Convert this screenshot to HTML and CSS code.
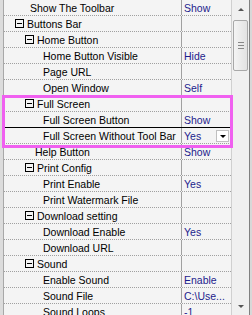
FILE: index.html
```html
<!DOCTYPE html>
<html lang="en">
<head>
    <meta charset="UTF-8">
    <title>Toolbar Settings</title>
    <link rel="stylesheet" href="styles.css">
</head>
<body>
    <div class="grid-window">
        <div class="edge"></div>
        <div class="rows">
            <div class="row"><div class="label leaf1">Show The Toolbar</div><div class="value">Show</div></div>
            <div class="row"><div class="label node1"><span class="toggle"></span>Buttons Bar</div><div class="value"></div></div>
            <div class="row"><div class="label node2"><span class="toggle"></span>Home Button</div><div class="value"></div></div>
            <div class="row"><div class="label leaf3">Home Button Visible</div><div class="value">Hide</div></div>
            <div class="row"><div class="label leaf3">Page URL</div><div class="value"></div></div>
            <div class="row"><div class="label leaf3">Open Window</div><div class="value">Self</div></div>
            <div class="row"><div class="label node2"><span class="toggle"></span>Full Screen</div><div class="value"></div></div>
            <div class="row"><div class="label leaf3">Full Screen Button</div><div class="value">Show</div></div>
            <div class="row editing"><div class="label leaf3">Full Screen Without Tool Bar</div><div class="value">Yes<span class="drop"></span></div></div>
            <div class="row"><div class="label leaf2">Help Button</div><div class="value">Show</div></div>
            <div class="row"><div class="label node2"><span class="toggle"></span>Print Config</div><div class="value"></div></div>
            <div class="row"><div class="label leaf3">Print Enable</div><div class="value">Yes</div></div>
            <div class="row"><div class="label leaf3">Print Watermark File</div><div class="value"></div></div>
            <div class="row"><div class="label node2"><span class="toggle"></span>Download setting</div><div class="value"></div></div>
            <div class="row"><div class="label leaf3">Download Enable</div><div class="value">Yes</div></div>
            <div class="row"><div class="label leaf3">Download URL</div><div class="value"></div></div>
            <div class="row"><div class="label node2"><span class="toggle"></span>Sound</div><div class="value"></div></div>
            <div class="row"><div class="label leaf3">Enable Sound</div><div class="value">Enable</div></div>
            <div class="row"><div class="label leaf3">Sound File</div><div class="value">C:\Use...</div></div>
            <div class="row"><div class="label leaf3">Sound Loops</div><div class="value">-1</div></div>
            <div class="highlight"></div>
        </div>
        <div class="scrollbar">
            <div class="arrow up"></div>
            <div class="thumb"><span class="grip"></span></div>
            <div class="track"></div>
            <div class="arrow down"></div>
        </div>
        <div class="frame"></div>
    </div>
</body>
</html>
```

FILE: styles.css
```css
body {
    margin: 0;
    font-family: "Liberation Sans", Arial, sans-serif;
    font-size: 10.5px;
    background-color: #f4f4f4;
}

.grid-window {
    display: flex;
    width: 252px;
    height: 315px;
    overflow: hidden;
}

/* thin gray strip on the left */
.edge {
    width: 3px;
    background-color: #dcdcdc;
    border-right: 1px solid #a8a8a8;
    flex-shrink: 0;
}

.rows {
    position: relative;
    width: 227px;
    flex-shrink: 0;
    border-right: 1px solid #d0d0d0;
}

.row {
    display: flex;
    height: 16px;
    box-sizing: border-box;
    border-bottom: 1px dotted #a0a0a0;
}

.label {
    width: 178px;
    box-sizing: border-box;
    flex-shrink: 0;
    display: flex;
    align-items: center;
    color: #000;
    border-right: 1px solid #a0a0a0;
    white-space: nowrap;
    overflow: hidden;
}

.value {
    flex: 1;
    min-width: 0;
    display: flex;
    align-items: center;
    padding-left: 2px;
    color: #1c1c8c;
    white-space: nowrap;
    overflow: hidden;
}

.leaf1 { padding-left: 26px; }
.leaf2 { padding-left: 31px; }
.leaf3 { padding-left: 39px; }
.node1 { padding-left: 11px; }
.node2 { padding-left: 21px; }

.toggle {
    width: 7px;
    height: 7px;
    border: 1px solid #000;
    margin-right: 3px;
    position: relative;
    flex-shrink: 0;
}

.toggle::after {
    content: '';
    position: absolute;
    left: 1px;
    right: 1px;
    top: 3px;
    height: 1px;
    background-color: #000;
}

.editing {
    border-top: 1px solid #000;
    margin-top: -1px;
    height: 17px;
}

.drop {
    margin-left: auto;
    margin-right: 2px;
    width: 13px;
    height: 12px;
    background-color: #fff;
    border: 1px solid #c0c0c0;
    box-sizing: border-box;
    position: relative;
    flex-shrink: 0;
}

.drop::after {
    content: '';
    position: absolute;
    left: 3px;
    top: 4px;
    border-left: 3px solid transparent;
    border-right: 3px solid transparent;
    border-top: 3px solid #000;
}

/* pink annotation box */
.highlight {
    position: absolute;
    left: -2px;
    right: -2px;
    top: 95px;
    height: 47px;
    border: 3px solid #f060f0;
}

.scrollbar {
    width: 17px;
    display: flex;
    flex-direction: column;
    background-color: #f0f0f0;
    border-right: 1px solid #808080;
    flex-shrink: 0;
}

.arrow {
    height: 18px;
    position: relative;
}

.arrow::after {
    content: '';
    position: absolute;
    left: 6px;
    border-left: 3px solid transparent;
    border-right: 3px solid transparent;
}

.arrow.up::after {
    top: 8px;
    border-bottom: 3px solid #555;
}

.arrow.down::after {
    top: 8px;
    border-top: 3px solid #555;
}

.thumb {
    height: 49px;
    margin: 2px 1px 0 1px;
    background: linear-gradient(to right, #f4f4f4, #e2e2e2);
    border: 1px solid #a8a8a8;
    border-radius: 2px;
    display: flex;
    align-items: center;
    justify-content: center;
}

.grip {
    width: 6px;
    height: 5px;
    border-top: 1px solid #888;
    border-bottom: 1px solid #888;
    position: relative;
}

.grip::after {
    content: '';
    position: absolute;
    left: 0;
    right: 0;
    top: 2px;
    height: 1px;
    background-color: #888;
}

.track {
    flex: 1;
}

.frame {
    flex: 1;
    background-color: #d8d8d8;
}
```
